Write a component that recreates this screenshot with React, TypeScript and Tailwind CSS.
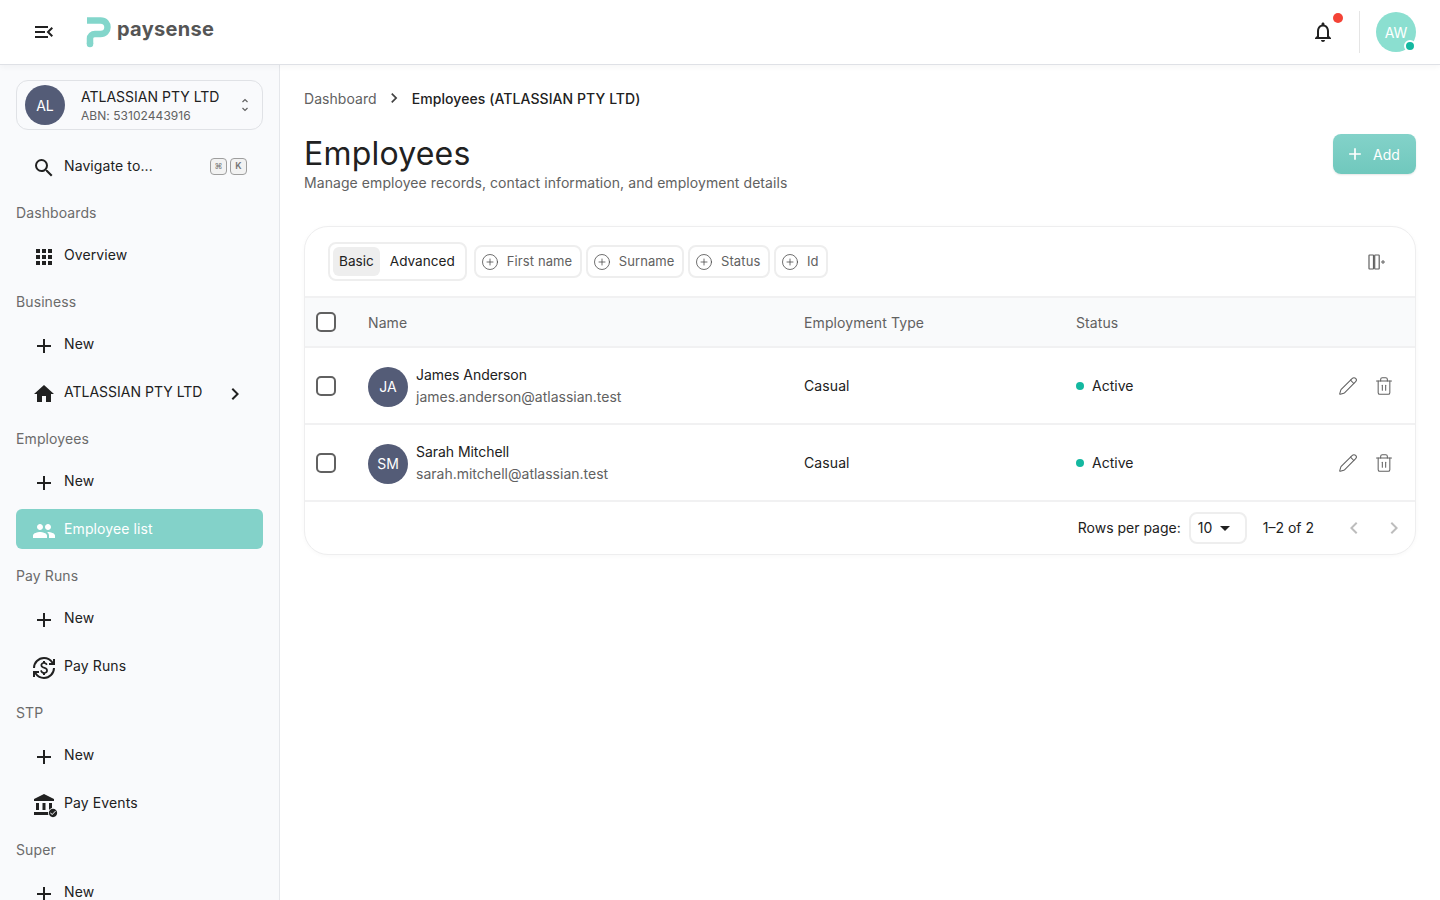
import React from "react";
import { MdMenuOpen, MdSearch, MdApps, MdAdd, MdHome, MdPeople, MdChevronRight, MdChevronLeft, MdAccountBalance, MdCurrencyExchange, MdOutlineNotifications, MdCheckCircle, MdArrowDropDown } from "react-icons/md";
import { Pencil, Trash2, CirclePlus } from "lucide-react";

function NavItem({ icon, label, active, right, tight }: { icon: React.ReactNode; label: string; active?: boolean; right?: React.ReactNode; tight?: boolean }) {
  return (
    <div className={`flex h-10 items-center rounded-md pl-4 pr-4 text-[14px] ${active ? "-mb-px mt-px bg-[#83d2c9] pb-[2px] text-white" : "text-[#212121]"}`}>
      <span className="mt-[6px] flex h-6 w-6 items-center justify-center text-[24px]">{icon}</span>
      <span className={`ml-2 flex-1 ${tight ? "tracking-[0px]" : "tracking-[0.1px]"}`}>{label}</span>
      {right}
    </div>
  );
}

function Label({ children }: { children: React.ReactNode }) {
  return <div className="mb-[10px] mt-[17px] h-[22px] text-[14px] leading-[22px] tracking-[0.1px] text-[#6b6b6b]">{children}</div>;
}

function Chip({ label }: { label: string }) {
  return (
    <div className="flex h-[33px] items-center gap-2 rounded-lg border-2 border-[#eeeeee] bg-white pl-[5px] pr-[7.5px] text-[13px] tracking-[0.1px] text-[#616161]">
      <CirclePlus size={18} strokeWidth={1} className="text-[#424242]" />
      <span>{label}</span>
    </div>
  );
}

function Check() {
  return <div className="h-5 w-5 rounded-[5px] border-2 border-[#616161] bg-white" />;
}

function Row({ initials, name, email }: { initials: string; name: string; email: string }) {
  return (
    <div className="flex h-[77px] items-center border-b-2 border-[#f1f1f2] text-[14px] text-[#212121]">
      <div className="w-[63px] pl-[11px]"><Check /></div>
      <div className="flex w-[436px] items-center">
        <div className="flex h-10 w-10 translate-y-px items-center justify-center rounded-full bg-[#545c77] text-[14px] text-white">{initials}</div>
        <div className="ml-2">
          <div className="leading-[22px] tracking-[-0.05px]">{name}</div>
          <div className="leading-[22px] text-[#616161]">{email}</div>
        </div>
      </div>
      <div className="w-[272px] tracking-[0.1px]">Casual</div>
      <div className="flex flex-1 items-center">
        <span className="h-2 w-2 rounded-full bg-[#14b8a0]" />
        <span className="ml-2">Active</span>
      </div>
      <div className="flex items-center gap-[16px] pr-[21px] text-[#616161]">
        <Pencil size={20} strokeWidth={1.25} />
        <Trash2 size={20} strokeWidth={1.25} />
      </div>
    </div>
  );
}

export default function App() {
  return (
    <div className="flex h-screen flex-col overflow-hidden bg-white font-['Inter',sans-serif]">
      <header className="z-10 flex h-[65px] shrink-0 items-center border-b border-[#dfe1e6] bg-white pl-8 pr-6 shadow-[0_2px_6px_rgba(0,0,0,0.04)]">
        <MdMenuOpen size={24} className="text-[#212121]" />
        <div className="ml-[30px] flex items-center">
          <svg width="28" height="32" viewBox="0 0 28 32" className="mt-[2px]" fill="none" stroke="#83d6cb" strokeWidth="6.5">
            <path d="M1 3.5H14.5C19.5 3.5 21.5 7 21.5 10.25C21.5 14 19 17 14.5 17H9C6 17 4 19 4 21.5V27" />
            <circle cx="4" cy="27" r="1.5" fill="#83d6cb" stroke="#83d6cb" strokeWidth="3.5" />
          </svg>
          <span className="mb-[6px] ml-[3px] text-[20px] font-bold tracking-[0.3px] text-[#555555]">paysense</span>
        </div>
        <div className="flex-1" />
        <div className="relative mr-6 flex h-6 w-6 items-center justify-center">
          <MdOutlineNotifications size={24} className="mt-[-1px] text-[#212121]" />
          <span className="absolute right-[-8px] top-[-7px] h-[10px] w-[10px] rounded-full bg-[#f44336]" />
        </div>
        <div className="h-[42px] w-px bg-[#e5e5e5]" />
        <div className="relative ml-4 flex h-10 w-10 items-center justify-center rounded-full bg-[#8bdfd0] text-[14px] text-white">
          AW
          <span className="absolute bottom-0 right-0 h-[12px] w-[12px] rounded-full border-2 border-white bg-[#14b8a0]" />
        </div>
      </header>

      <div className="flex min-h-0 flex-1">
        <aside className="w-[280px] shrink-0 overflow-hidden border-r border-[#e5e7eb] bg-[#f9fafc] px-4 pt-[15px]">
          <div className="flex h-[50px] items-center rounded-xl border border-[#e0e2e6] pl-2 pr-3">
            <div className="flex h-10 w-10 items-center justify-center rounded-full bg-[#545c77] text-[14px] text-white">AL</div>
            <div className="ml-4 flex-1 pt-[2px]">
              <div className="text-[14px] leading-[20px] text-[#212121]">ATLASSIAN PTY LTD</div>
              <div className="text-[12px] leading-[18px] tracking-[0.05px] text-[#616161]">ABN: 53102443916</div>
            </div>
            <svg width="10" height="14" viewBox="0 0 10 14" fill="none" stroke="#616161" strokeWidth="1.2" className="ml-[2px]">
              <path d="M2.5 4 5 1.5 7.5 4M2.5 10 5 12.5 7.5 10" />
            </svg>
          </div>
          <div className="mt-[15px]">
            <NavItem
              icon={<MdSearch />}
              label="Navigate to..."
              right={
                <div className="flex translate-y-px gap-[3px]">
                  <span className="flex h-[17px] w-[17px] items-center justify-center rounded-[4px] border border-[#9e9e9e] bg-[#f2f2f2] text-[8px] text-[#757575]">⌘</span>
                  <span className="flex h-[17px] w-[17px] items-center justify-center rounded-[4px] border border-[#9e9e9e] bg-[#f2f2f2] text-[9px] font-semibold text-[#757575]">K</span>
                </div>
              }
            />
          </div>
          <Label>Dashboards</Label>
          <NavItem icon={<MdApps />} label="Overview" />
          <Label>Business</Label>
          <div className="flex flex-col gap-2">
            <NavItem icon={<MdAdd />} label="New" />
            <NavItem icon={<MdHome />} label="ATLASSIAN PTY LTD" tight right={<MdChevronRight size={24} className="mt-[6px] text-[#212121]" />} />
          </div>
          <Label>Employees</Label>
          <div className="flex flex-col gap-2">
            <NavItem icon={<MdAdd />} label="New" />
            <NavItem icon={<MdPeople />} label="Employee list" active />
          </div>
          <Label>Pay Runs</Label>
          <div className="flex flex-col gap-2">
            <NavItem icon={<MdAdd />} label="New" />
            <NavItem icon={<MdCurrencyExchange />} label="Pay Runs" />
          </div>
          <Label>STP</Label>
          <div className="flex flex-col gap-2">
            <NavItem icon={<MdAdd />} label="New" />
            <NavItem
              icon={
                <span className="relative flex">
                  <MdAccountBalance />
                  <MdCheckCircle className="absolute bottom-[-1px] right-[-2px] rounded-full bg-[#f9fafc] text-[10px]" />
                </span>
              }
              label="Pay Events"
            />
          </div>
          <Label>Super</Label>
          <NavItem icon={<MdAdd />} label="New" />
        </aside>

        <main className="flex-1 px-6 pt-[23px]">
          <div className="flex h-5 items-center text-[14px]">
            <span className="tracking-[0.05px] text-[#616161]">Dashboard</span>
            <MdChevronRight size={20} className="ml-[7px] mr-[8px] text-[#424242]" />
            <span className="font-medium tracking-[0.08px] text-[#212121]">Employees (ATLASSIAN PTY LTD)</span>
          </div>
          <div className="mt-[27px] flex items-start justify-between">
            <div>
              <h1 className="text-[32px] leading-[38px] tracking-[0.2px] text-[#212121]">Employees</h1>
              <p className="text-[14px] leading-[20px] tracking-[0.07px] text-[#616161]">Manage employee records, contact information, and employment details</p>
            </div>
            <button className="mt-[-1px] flex h-10 w-[83px] items-center gap-2 rounded-lg bg-gradient-to-b from-[#83d2c9] to-[#70c8bd] pl-3 text-[14px] text-white shadow-[0_1px_2px_rgba(0,0,0,0.1)]">
              <MdAdd size={20} />
              Add
            </button>
          </div>

          <div className="mt-[33px] overflow-hidden rounded-[24px] border border-[#eeeeef] bg-white shadow-[0_1px_4px_rgba(0,0,0,0.03)]">
            <div className="flex h-[69px] items-center pl-[23px] pr-[27px]">
              <div className="flex h-[39px] items-center rounded-lg border-2 border-[#eeeeee] pl-[3px] text-[13.6px] text-[#212121]">
                <span className="flex h-[29px] items-center rounded-md bg-[#eeeeee] px-[6px]">Basic</span>
                <span className="ml-[10px] mr-[10px]">Advanced</span>
              </div>
              <div className="ml-[7px] flex items-center gap-[4px]">
                <Chip label="First name" />
                <Chip label="Surname" />
                <Chip label="Status" />
                <Chip label="Id" />
              </div>
              <div className="flex-1" />
              <svg width="20" height="20" viewBox="0 0 20 20" fill="none" stroke="#616161" strokeWidth="1.2">
                <rect x="1" y="3" width="4.5" height="14" rx="0.5" />
                <rect x="6.7" y="3" width="4.5" height="14" rx="0.5" />
                <path d="M13 10h4M15 8v4" strokeWidth="1" />
              </svg>
            </div>
            <div className="flex h-[52px] items-center border-y-2 border-[#f1f1f2] bg-[#f9fafb] text-[14px] tracking-[0.1px] text-[#616161]">
              <div className="w-[63px] pl-[11px]"><Check /></div>
              <div className="w-[436px]">Name</div>
              <div className="w-[272px]">Employment Type</div>
              <div>Status</div>
            </div>
            <Row initials="JA" name="James Anderson" email="james.anderson@atlassian.test" />
            <Row initials="SM" name="Sarah Mitchell" email="sarah.mitchell@atlassian.test" />
            <div className="flex h-[52px] items-center justify-end pb-px pr-[9px] text-[14px] text-[#212121]">
              <span>Rows per page:</span>
              <div className="ml-2 flex h-[32px] w-[58px] items-center rounded-lg border-2 border-[#eeeeee] pl-[7px] text-[14px]">
                <span>10</span>
                <MdArrowDropDown size={24} className="ml-[1px]" />
              </div>
              <span className="ml-[16px]">1–2 of 2</span>
              <MdChevronLeft size={24} className="ml-[28px] text-[#bdbdbd]" />
              <MdChevronRight size={24} className="ml-[16px] text-[#bdbdbd]" />
            </div>
          </div>
        </main>
      </div>
    </div>
  );
}
